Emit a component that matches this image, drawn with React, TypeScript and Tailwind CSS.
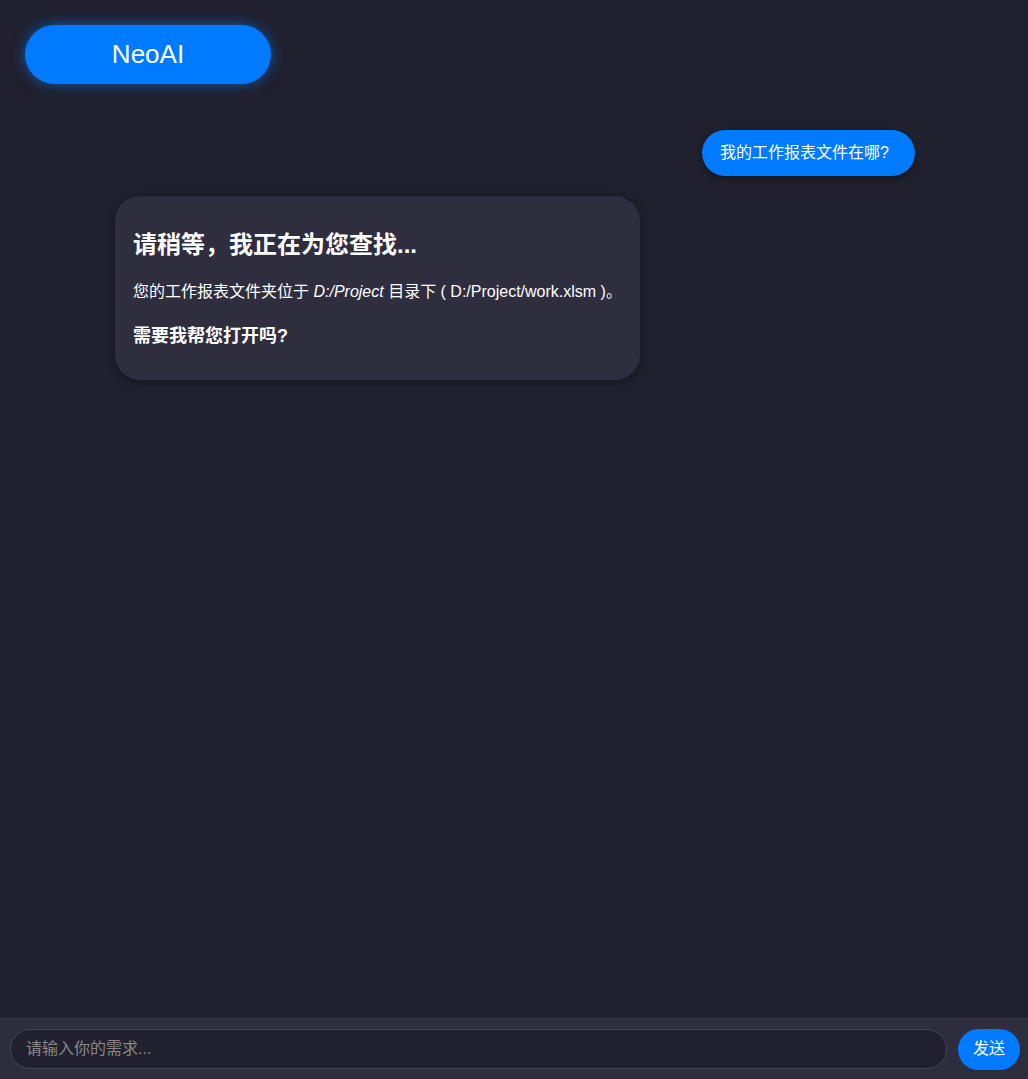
import React from "react";

export default function App() {
  const font = { fontFamily: '"Liberation Sans", Arial, "Noto Sans CJK SC", sans-serif' };
  return (
    <div className="w-[1028px] h-[1079px] bg-[#20202e] flex flex-col text-white" style={font}>
      <header className="px-[25px] pt-[25px]">
        <div className="w-[246px] h-[59px] rounded-full bg-[#007bff] flex items-center justify-center text-[26px] shadow-[0_0_14px_rgba(0,123,255,0.6)]">
          NeoAI
        </div>
      </header>
      <main className="flex-1 w-[800px] mx-auto pt-[46px] flex flex-col">
        <div className="flex justify-end">
          <div className="h-[46px] pl-[18px] pr-[26px] mr-[-1px] rounded-full bg-[#007bff] flex items-center text-[16px] shadow-[0_2px_6px_rgba(0,0,0,0.35)]">
            我的工作报表文件在哪?
          </div>
        </div>
        <div className="mt-[20px] flex">
          <div className="w-[525px] ml-px rounded-[25px] bg-[#2f2e3e] px-[18px] pt-[33px] pb-[31px] shadow-[0_2px_8px_rgba(0,0,0,0.35)]">
            <h3 className="text-[24px] font-bold leading-[32px]">请稍等，我正在为您查找...</h3>
            <p className="mt-[19px] text-[16px] leading-[24px]">
              您的工作报表文件夹位于 <em>D:/Project</em> 目录下 ( D:/Project/work.xlsm )。
            </p>
            <p className="mt-[19px] text-[18px] font-bold leading-[26px]">需要我帮您打开吗?</p>
          </div>
        </div>
      </main>
      <footer className="h-[61px] border-t border-[#3a3a4a] bg-[#2e2d3d] flex items-center pl-[10px] pr-[8px] gap-[11px]">
        <input
          className="flex-1 h-[40px] rounded-full bg-[#20202e] border border-[#444452] px-[15px] text-[16px] text-white placeholder-[#888] outline-none"
          placeholder="请输入你的需求..."
          style={font}
        />
        <button className="w-[62px] h-[41px] rounded-full bg-[#007bff] text-white text-[16px]" style={font}>
          发送
        </button>
      </footer>
    </div>
  );
}
